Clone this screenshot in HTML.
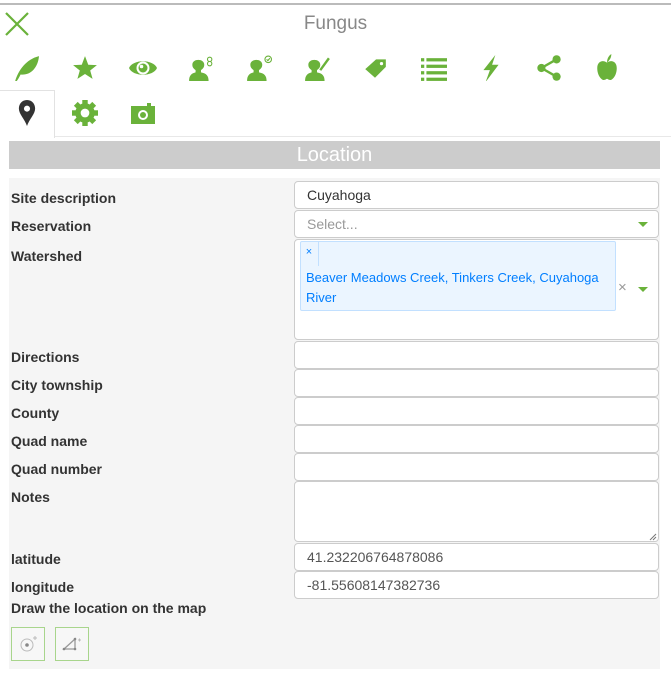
<!DOCTYPE html>
<html><head><meta charset="utf-8"><style>
*{box-sizing:border-box;margin:0;padding:0}
body{width:671px;height:687px;background:#fff;position:relative;font-family:"Liberation Sans",Arial,sans-serif;overflow:hidden}
.a{position:absolute}
.topline{left:0;top:3px;width:671px;height:2px;background:#bbb}
.title{left:0;width:671px;top:13px;text-align:center;font-size:19px;color:#888}
.ic{position:absolute;width:26px;height:26px}
.tabbox{left:0;top:90px;width:55px;height:48px;border-top:1px solid #e2e2e2;border-right:1px solid #e2e2e2;background:#fff}
.tabline{left:55px;top:136px;width:616px;height:1px;background:#e8e8e8}
.hdr{left:9px;top:141px;width:651px;height:28px;background:#ccc;color:#fff;text-align:center;font-size:20px;line-height:28px}
.form{left:9px;top:178px;width:651px;height:491px;background:#f5f5f5}
.lab{position:absolute;left:11px;font-size:14px;font-weight:bold;color:#333}
.in{position:absolute;left:294px;width:365px;height:28px;background:#fff;border:1px solid #ccc;border-radius:4px;font-size:14px;color:#555;padding-left:12px;line-height:26px}
.tri{position:absolute;width:0;height:0;border-left:5px solid transparent;border-right:5px solid transparent;border-top:5px solid #6ab23a}
.btn{position:absolute;top:627px;width:34px;height:34px;border:1px solid #a8d58c;background:#f7f7f7}
</style></head><body>
<div class="a topline"></div>
<svg class="a" style="left:4px;top:11px" width="26" height="26" viewBox="0 0 26 26"><path d="M2 2L24 24M24 2L2 24" stroke="#6ab23a" stroke-width="2.2"/></svg>
<div class="a title">Fungus</div>

<svg class="ic" style="left:13px;top:55px" viewBox="0 0 24 24"><path d="M2 24C5 14 12 4 24 1C23 12 16 19 7 18C6 20 5 22 3.5 24Z" fill="#6ab23a"/></svg>
<svg class="ic" style="left:72px;top:55px" viewBox="0 0 24 24"><path d="M12 1L15 9L23 9.3L16.8 14.3L19 22L12 17.5L5 22L7.2 14.3L1 9.3L9 9Z" fill="#6ab23a"/></svg>
<svg class="a" style="left:129px;top:57px" width="28" height="22" viewBox="0 0 28 22"><path d="M0 11C4 2 24 2 28 11C24 20 4 20 0 11Z" fill="#6ab23a"/><circle cx="14" cy="11" r="6.5" fill="#fff"/><circle cx="14" cy="11" r="4.5" fill="#6ab23a"/><circle cx="12.5" cy="9.5" r="1.8" fill="#fff"/></svg>
<svg class="ic" style="left:188px;top:55px" viewBox="0 0 24 24"><path d="M4 9C4 3 15 3 15 9C15 12 13 13 12 14L12 16C17 17 19 19 19 24L1 24C1 19 3 17 7 16L7 14C6 13 4 12 4 9Z" fill="#6ab23a"/><circle cx="20" cy="4" r="2" fill="none" stroke="#6ab23a"/><circle cx="20" cy="8" r="2" fill="none" stroke="#6ab23a"/></svg>
<svg class="ic" style="left:246px;top:55px" viewBox="0 0 24 24"><path d="M4 9C4 3 15 3 15 9C15 12 13 13 12 14L12 16C17 17 19 19 19 24L1 24C1 19 3 17 7 16L7 14C6 13 4 12 4 9Z" fill="#6ab23a"/><circle cx="20.5" cy="4" r="3" fill="none" stroke="#6ab23a"/><path d="M19 4L20.2 5.2L22 3" stroke="#6ab23a" fill="none"/></svg>
<svg class="ic" style="left:304px;top:55px" viewBox="0 0 24 24"><path d="M4 9C4 3 15 3 15 9C15 12 13 13 12 14L12 16C17 17 19 19 19 24L1 24C1 19 3 17 7 16L7 14C6 13 4 12 4 9Z" fill="#6ab23a"/><path d="M15 14L23 3" stroke="#6ab23a" stroke-width="2.2"/></svg>
<svg class="ic" style="left:362px;top:55px" viewBox="0 0 24 24"><path d="M13 4L22 4L22 11L12 21L3 13Z" fill="#6ab23a"/><circle cx="18" cy="8" r="1.5" fill="#fff"/></svg>
<svg class="ic" style="left:421px;top:56px" viewBox="0 0 24 24"><g fill="#6ab23a"><rect x="0" y="2" width="3" height="3"/><rect x="5" y="2" width="19" height="3"/><rect x="0" y="8" width="3" height="3"/><rect x="5" y="8" width="19" height="3"/><rect x="0" y="14" width="3" height="3"/><rect x="5" y="14" width="19" height="3"/><rect x="0" y="20" width="3" height="3"/><rect x="5" y="20" width="19" height="3"/></g></svg>
<svg class="ic" style="left:478px;top:55px" viewBox="0 0 24 24"><path d="M16 0L5 14L11 14L7 25L19 9L13 9Z" fill="#6ab23a"/></svg>
<svg class="ic" style="left:536px;top:55px" viewBox="0 0 24 24"><path d="M19 4L5 12L19 20" stroke="#6ab23a" stroke-width="2.2" fill="none"/><circle cx="19" cy="4" r="3.8" fill="#6ab23a"/><circle cx="5" cy="12" r="3.8" fill="#6ab23a"/><circle cx="19" cy="20" r="3.8" fill="#6ab23a"/></svg>
<svg class="ic" style="left:594px;top:54px" viewBox="0 0 24 24"><path d="M12 8C8 5 3 7 3 13C3 20 7 24 9 24C11 24 11 23 12 23C13 23 13 24 15 24C17 24 21 20 21 13C21 7 16 5 12 8Z" fill="#6ab23a"/><path d="M12 8C12 5 13 2 16 0C16 3 15 5 12 8Z" fill="#6ab23a"/></svg>

<div class="a tabbox"></div>
<div class="a tabline"></div>
<svg class="ic" style="left:14px;top:100px" viewBox="0 0 24 24"><path d="M12 0C7 0 4.5 4 4.5 8C4.5 13 10 18 12 24C14 18 19.5 13 19.5 8C19.5 4 17 0 12 0Z" fill="#333"/><circle cx="12" cy="8" r="2.8" fill="#fff"/></svg>
<svg class="ic" style="left:72px;top:100px" viewBox="0 0 24 24"><g fill="#6ab23a"><circle cx="12" cy="12" r="9"/><rect x="9.5" y="0" width="5" height="24"/><rect x="0" y="9.5" width="24" height="5"/><rect x="9.5" y="0" width="5" height="24" transform="rotate(45 12 12)"/><rect x="9.5" y="0" width="5" height="24" transform="rotate(-45 12 12)"/></g><circle cx="12" cy="12" r="4" fill="#fff"/></svg>
<svg class="a" style="left:130px;top:101px" width="26" height="24" viewBox="0 0 26 24"><path d="M1 5H17V2H21V5H25V23H1Z" fill="#6ab23a"/><circle cx="13" cy="14" r="5" fill="#fff"/><circle cx="13" cy="14" r="3" fill="#6ab23a"/></svg>

<div class="a hdr">Location</div>
<div class="a form"></div>

<div class="lab" style="top:190px">Site description</div>
<div class="in" style="top:181px;color:#333">Cuyahoga</div>
<div class="lab" style="top:218px">Reservation</div>
<div class="in" style="top:210px;color:#999">Select...</div>
<div class="tri" style="left:638px;top:222px"></div>
<div class="lab" style="top:248px">Watershed</div>
<div class="in" style="top:239px;height:101px"></div>
<div class="a" style="left:300px;top:241px;width:316px;height:70px;background:#ebf5ff;border:1px solid #c2e0ff;border-radius:2px"></div>
<div class="a" style="left:300px;top:241px;width:19px;height:25px;border-right:1px solid #c2e0ff;color:#007eff;font-size:11px;text-align:center;line-height:22px">×</div>
<div class="a" style="left:306px;top:268px;width:300px;color:#007eff;font-size:13px;line-height:20px">Beaver Meadows Creek, Tinkers Creek, Cuyahoga River</div>
<div class="a" style="left:618px;top:279px;color:#999;font-size:15px">×</div>
<div class="tri" style="left:638px;top:287px"></div>

<div class="lab" style="top:349px">Directions</div>
<div class="in" style="top:341px"></div>
<div class="lab" style="top:377px">City township</div>
<div class="in" style="top:369px"></div>
<div class="lab" style="top:405px">County</div>
<div class="in" style="top:397px"></div>
<div class="lab" style="top:433px">Quad name</div>
<div class="in" style="top:425px"></div>
<div class="lab" style="top:461px">Quad number</div>
<div class="in" style="top:453px"></div>
<div class="lab" style="top:489px">Notes</div>
<div class="in" style="top:481px;height:61px"></div>
<svg class="a" style="left:649px;top:533px" width="8" height="8"><path d="M1 7L7 1M4 7L7 4" stroke="#777"/></svg>
<div class="lab" style="top:551px">latitude</div>
<div class="in" style="top:543px">41.232206764878086</div>
<div class="lab" style="top:579px">longitude</div>
<div class="in" style="top:571px">-81.55608147382736</div>
<div class="lab" style="top:600px">Draw the location on the map</div>
<div class="btn" style="left:11px"><svg width="32" height="32"><circle cx="15" cy="17" r="6" fill="none" stroke="#bbb"/><circle cx="15" cy="17" r="1.8" fill="#888"/><path d="M21 10h4M23 8v4" stroke="#bbb"/></svg></div>
<div class="btn" style="left:55px"><svg width="32" height="32"><path d="M8 21L19 11L19 21Z" fill="none" stroke="#999" stroke-width="1.3"/><circle cx="8" cy="21" r="1.3" fill="#888"/><circle cx="19" cy="11" r="1.3" fill="#888"/><circle cx="19" cy="21" r="1.3" fill="#888"/><path d="M22 12h3M23.5 10.5v3" stroke="#bbb"/></svg></div>
</body></html>
